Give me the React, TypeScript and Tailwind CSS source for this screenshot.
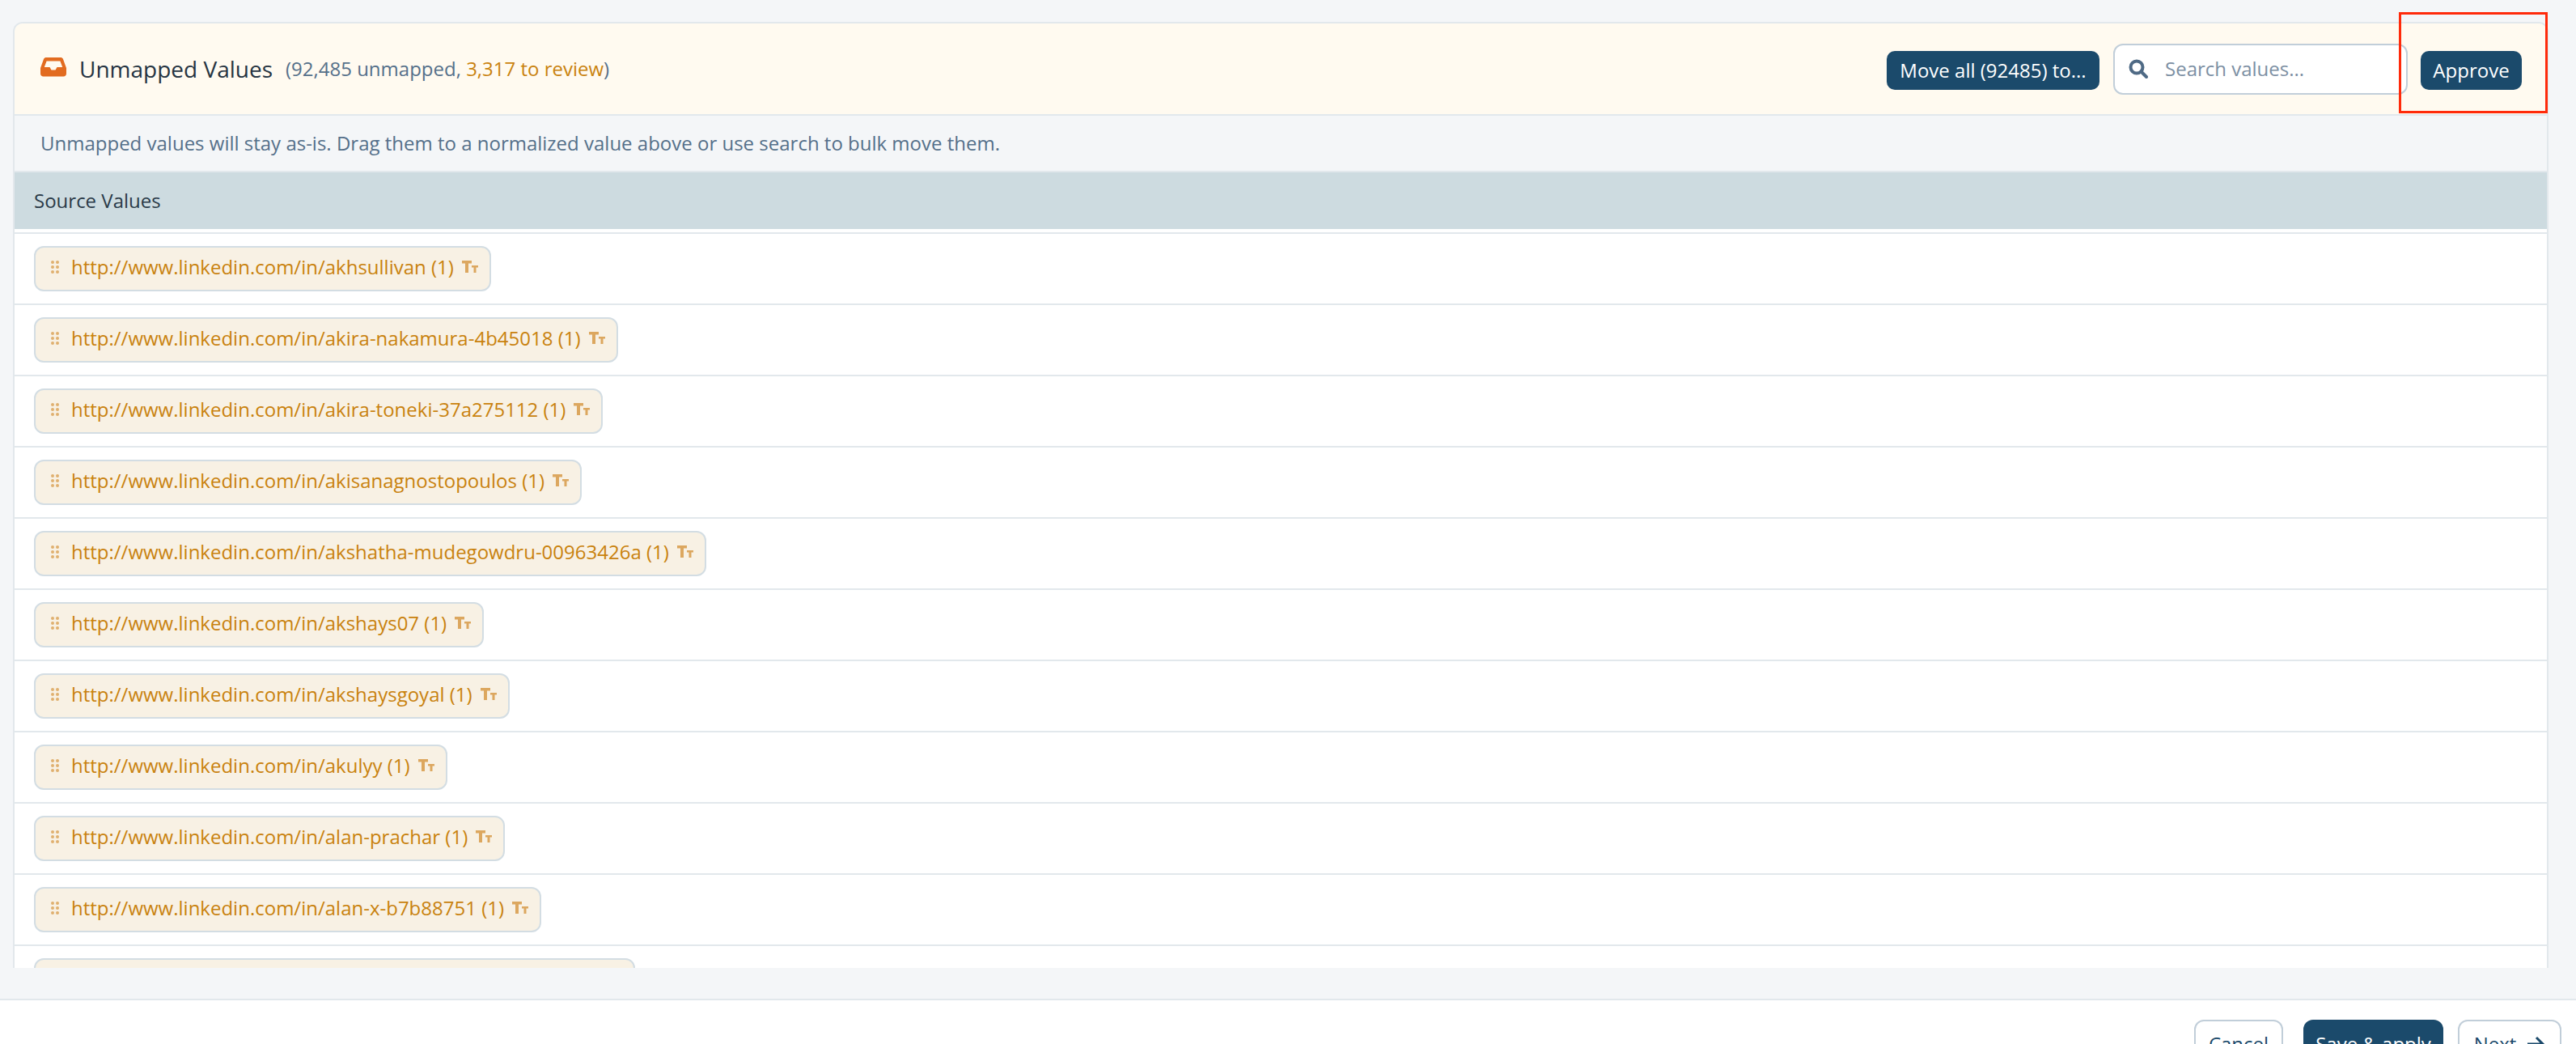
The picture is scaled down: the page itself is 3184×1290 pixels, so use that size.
const rows = [
  "http://www.linkedin.com/in/akhsullivan (1)",
  "http://www.linkedin.com/in/akira-nakamura-4b45018 (1)",
  "http://www.linkedin.com/in/akira-toneki-37a275112 (1)",
  "http://www.linkedin.com/in/akisanagnostopoulos (1)",
  "http://www.linkedin.com/in/akshatha-mudegowdru-00963426a (1)",
  "http://www.linkedin.com/in/akshays07 (1)",
  "http://www.linkedin.com/in/akshaysgoyal (1)",
  "http://www.linkedin.com/in/akulyy (1)",
  "http://www.linkedin.com/in/alan-prachar (1)",
  "http://www.linkedin.com/in/alan-x-b7b88751 (1)",
  "http://www.linkedin.com/in/alana-christine-macdonaldi (1)",
];

function Grip() {
  return (
    <svg width="10" height="16" viewBox="0 0 10 16" className="shrink-0" fill="#e0b06f">
      {[2, 8, 14].map((y) => (
        <g key={y}>
          <circle cx="2" cy={y} r="2" />
          <circle cx="8" cy={y} r="2" />
        </g>
      ))}
    </svg>
  );
}

function TextHeight() {
  return (
    <svg width="20" height="15" viewBox="0 0 20 15" className="block shrink-0" fill="#dca75f">
      <path d="M0 0h12v3.500H8V15H4V3.500H0z" />
      <path d="M12 6h8v2.500h-2.500V15h-3V8.500H12z" />
    </svg>
  );
}

export default function App() {
  return (
    <div className="relative flex h-[1290px] w-[3184px] flex-col overflow-hidden bg-[#f4f6f8] font-['Open_Sans',sans-serif] text-[24px]">
      <div className="min-h-0 flex-1 pl-[16px] pr-[34px] pt-[27px]">
        <div className="h-[1169px] overflow-hidden rounded-t-[12px] border-x-2 border-t-2 border-[#e2e8ec]">
          <div className="flex h-[114px] items-center justify-between border-b-2 border-[#e2e8ec] bg-[#fffaf0] pl-[32px] pr-[31px]">
            <div className="flex items-center">
              <svg width="32" height="24" viewBox="0 0 32 24" className="mb-[4px] shrink-0" fill="#e26b20">
                <path fillRule="evenodd" d="M7 0h18c1.200 0 2.200.6 2.800 1.600L31.600 12c.3.5.4 1 .4 1.600V20c0 2-1.600 3.500-3.500 3.500h-25C1.600 23.500 0 22 0 20v-6.400c0-.6.100-1.100.4-1.600L4.200 1.600C4.800.6 5.800 0 7 0zM7.600 4.500 4.800 12h6.700l2 3.500h5l2-3.500h6.700l-2.800-7.500z" />
              </svg>
              <span className="ml-[16px] text-[28px] font-medium leading-none text-[#263442]">Unmapped Values</span>
              <span className="ml-[16px] text-[#55708a]">
                (92,485 unmapped, <span className="text-[#c9820e]">3,317 to review</span>)
              </span>
            </div>
            <div className="flex items-center">
              <button className="mt-[4px] h-[48px] w-[263px] rounded-[10px] bg-[#1b4a6b] text-center font-medium text-white">Move all (92485) to...</button>
              <div className="ml-[17px] flex h-[63px] w-[364px] items-center rounded-[12px] border-2 border-[#c1ced9] bg-white pl-[17px]">
                <svg width="24" height="24" viewBox="0 0 24 24" fill="none" stroke="#4f6a85" strokeWidth="4" className="shrink-0">
                  <circle cx="10" cy="10" r="7.500" />
                  <path d="M15.500 15.500 22 22" strokeLinecap="round" />
                </svg>
                <span className="ml-[21px] text-[#7c8fa3]">Search values...</span>
              </div>
              <button className="ml-[16px] mt-[4px] h-[48px] w-[125px] rounded-[10px] bg-[#1b4a6b] text-center font-medium text-white">Approve</button>
            </div>
          </div>
          <div className="flex h-[70px] items-center border-b-2 border-[#e2e8ec] pl-[32px] text-[#55708a]">
            Unmapped values will stay as-is. Drag them to a normalized value above or use search to bulk move them.
          </div>
          <div className="flex h-[70px] items-center bg-[#cddbe0] pl-[24px] font-medium text-[#2a3a48]">Source Values</div>
          <div className="h-[6px] border-b-2 border-[#e2e8ec] bg-white" />
          <div className="bg-white">
            {rows.map((r) => (
              <div key={r} className="flex h-[88px] items-center border-b-2 border-[#e2e8ec] pl-[24px]">
                <div className="flex h-[56px] items-center rounded-[12px] border-2 border-[#d3dde3] bg-[#f8f1e4] pb-[5px] pl-[19px] pr-[14px]">
                  <Grip />
                  <span className="ml-[15px] text-[#c9820e]">{r}</span>
                  <span className="ml-[10px]"><TextHeight /></span>
                </div>
              </div>
            ))}
          </div>
        </div>
      </div>
      <div className="flex h-[56px] shrink-0 items-start justify-end border-t-2 border-[#e2e8ec] bg-white pr-[18px] pt-[24px]">
        <button className="h-[60px] w-[110px] rounded-[12px] border-2 border-[#c1ced9] bg-white font-medium text-[#1b4a6b]">Cancel</button>
        <button className="ml-[25px] h-[60px] w-[173px] rounded-[12px] bg-[#1b4a6b] font-medium text-white">Save &amp; apply</button>
        <button className="ml-[18px] flex h-[60px] w-[128px] items-center justify-center rounded-[12px] border-2 border-[#c1ced9] bg-white font-medium text-[#1b4a6b]">
          Next
          <svg width="24" height="24" viewBox="0 0 24 24" fill="none" stroke="#1b4a6b" strokeWidth="3" className="ml-[12px]">
            <path d="M2 12h19M13 4l8 8-8 8" />
          </svg>
        </button>
      </div>
      <div className="absolute left-[2965px] top-[15px] h-[125px] w-[184px] border-[3px] border-[#ff2a0a]" />
    </div>
  );
}
